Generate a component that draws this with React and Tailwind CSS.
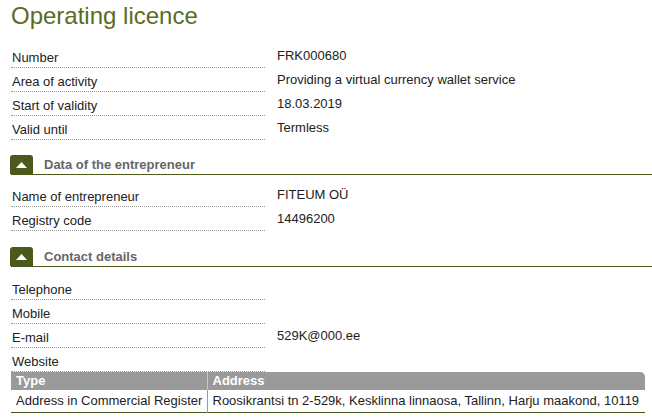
import React from 'react';

const licence = [
  ['Number', 'FRK000680'],
  ['Area of activity', 'Providing a virtual currency wallet service'],
  ['Start of validity', '18.03.2019'],
  ['Valid until', 'Termless'],
];

const entrepreneur = [
  ['Name of entrepreneur', 'FITEUM OÜ'],
  ['Registry code', '14496200'],
];

const contacts = [
  ['Telephone', ''],
  ['Mobile', ''],
  ['E-mail', '529K@000.ee'],
  ['Website', ''],
];

function Row({ label, value }) {
  return (
    <div className="flex h-[24px]">
      <div className="w-[254px] shrink-0 border-b border-dotted border-[#9a9a9a] pl-px pt-[6px] leading-[16px]">
        {label}
      </div>
      <div className="ml-[12px] pt-[4px] leading-[16px]">{value}</div>
    </div>
  );
}

function SectionHeader({ title }) {
  return (
    <div className="flex items-end border-b border-[#4b5a1c] -mr-[11px]">
      <div className="flex h-[19px] w-[23px] items-center justify-center rounded-t-[3px] bg-[#4b5a1c] -ml-px">
        <svg width="11" height="6" viewBox="0 0 11 6">
          <path d="M5.5 0 L11 6 L0 6 Z" fill="#fff" />
        </svg>
      </div>
      <div className="ml-[11px] pb-[1px] text-[13px] font-bold leading-[16px] text-[#666]">{title}</div>
    </div>
  );
}

export default function App() {
  return (
    <div
      className="h-[419px] w-[652px] overflow-hidden bg-white pl-[11px] text-[13px] text-[#222]"
      style={{ fontFamily: '"Liberation Sans", Arial, sans-serif' }}
    >
      <h1 className="pt-[1px] text-[24px] leading-[30px] text-[#5b6b1f]">Operating licence</h1>

      <div className="mt-[13px]">
        {licence.map(([l, v]) => (
          <Row key={l} label={l} value={v} />
        ))}
      </div>

      <div className="mt-[15px]">
        <SectionHeader title="Data of the entrepreneur" />
      </div>
      <div className="mt-[8px]">
        {entrepreneur.map(([l, v]) => (
          <Row key={l} label={l} value={v} />
        ))}
      </div>

      <div className="mt-[16px]">
        <SectionHeader title="Contact details" />
      </div>
      <div className="mt-[9px]">
        {contacts.map(([l, v]) => (
          <Row key={l} label={l} value={v} />
        ))}
      </div>

      <table className="w-[634px] border-collapse border-b border-[#4b5a1c]">
        <thead>
          <tr className="bg-[#9a9a9a] text-left text-white">
            <th className="h-[18px] w-[196px] border-r border-[#c8c8c8] pl-[5px] font-bold leading-[16px]">Type</th>
            <th className="h-[18px] rounded-tr-[5px] pl-[5px] font-bold leading-[16px]">Address</th>
          </tr>
        </thead>
        <tbody>
          <tr>
            <td className="h-[22px] border-r border-[#9a9a9a] pl-[5px] leading-[16px]">Address in Commercial Register</td>
            <td className="h-[22px] pl-[5px] leading-[16px]">
              Roosikrantsi tn 2-529k, Kesklinna linnaosa, Tallinn, Harju maakond, 10119
            </td>
          </tr>
        </tbody>
      </table>
    </div>
  );
}
